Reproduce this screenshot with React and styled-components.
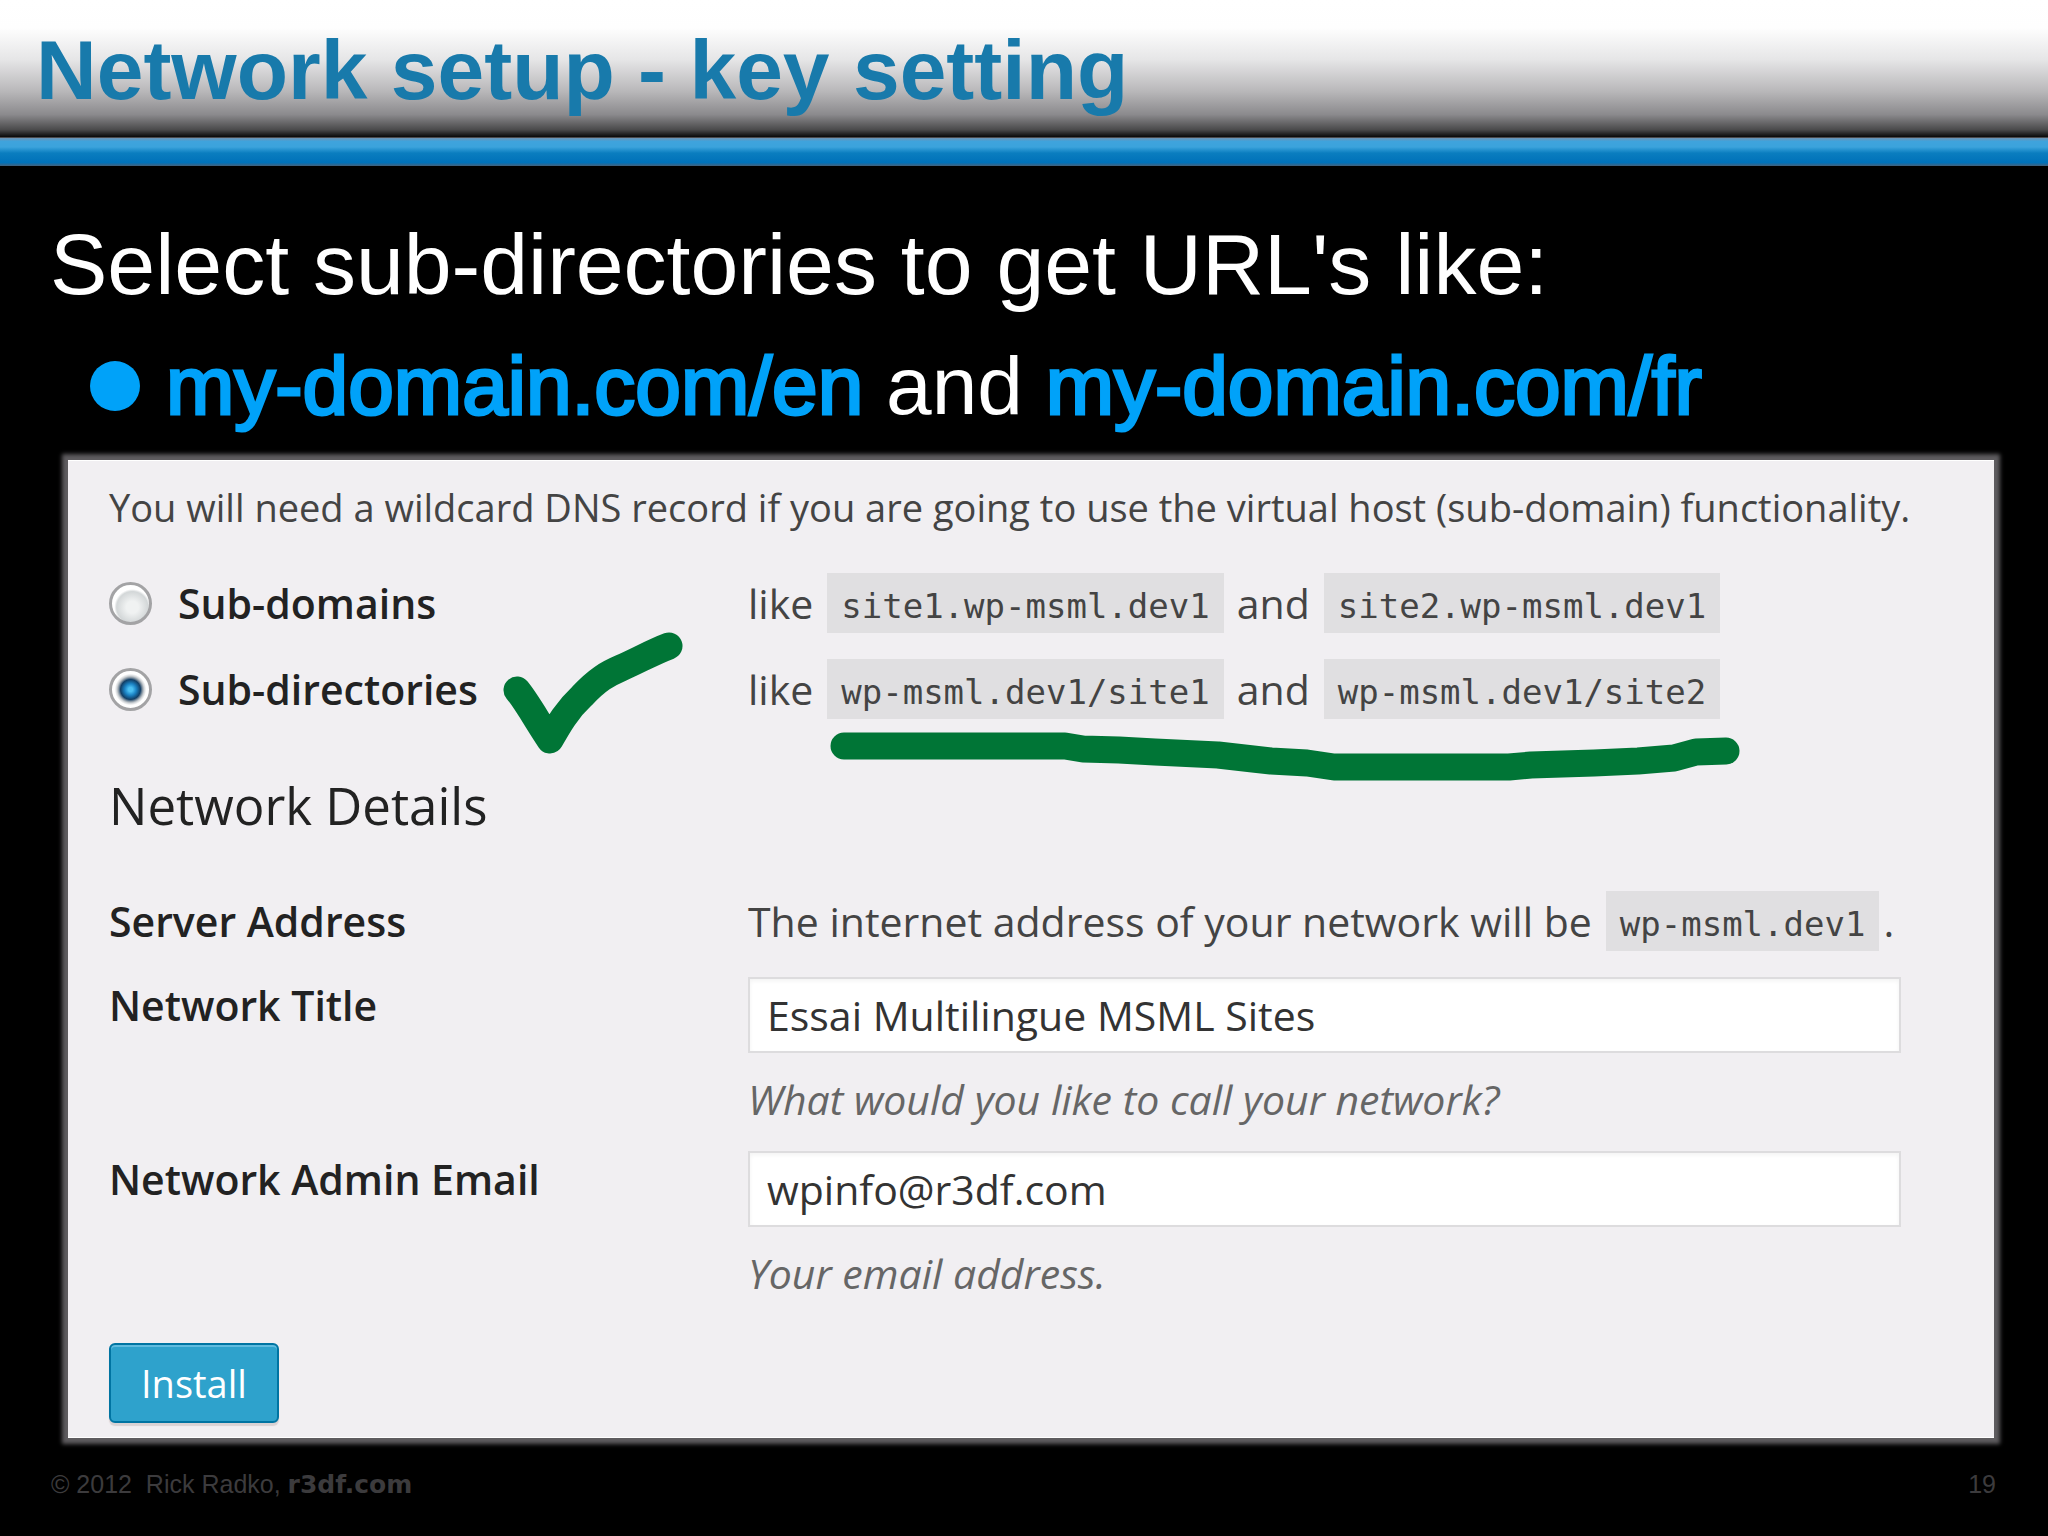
import React, { useState } from "react";
import styled, { createGlobalStyle } from "styled-components";

const GlobalStyle = createGlobalStyle`
  * {
    box-sizing: border-box;
  }
  body {
    margin: 0;
    background: #000;
  }
`;

const Slide = styled.div`
  display: flex;
  flex-direction: column;
  min-height: 100vh;
  background: #000;
  color: #fff;
  font-family: "Liberation Sans", Arial, sans-serif;
`;

const Header = styled.header`
  padding: 20px 36px 18px;
  background: linear-gradient(
    #fff 0%,
    #fefefe 20%,
    #e6e6e7 43%,
    #b9b8ba 66%,
    #8b8a8d 83%,
    #4a4a4b 94%,
    #0c0c0c 99%,
    #6d6d70 100%
  );
`;

const Title = styled.h1`
  margin: 0;
  font-size: 84px;
  line-height: 100px;
  color: #187aab;
`;

const Stripe = styled.div`
  height: 28px;
  background: linear-gradient(
    #6f93b3 0%,
    #3fa3dc 12%,
    #3ba3dc 32%,
    #0a7dbf 54%,
    #0071b9 88%,
    #43617c 100%
  );
`;

const Content = styled.main`
  display: flex;
  flex-direction: column;
  gap: 22px;
  padding: 48px 54px 0 50px;
`;

const Lead = styled.p`
  margin: 0;
  font-size: 86px;
  line-height: 100px;
`;

const Bullets = styled.ul`
  margin: 0;
  padding: 0 0 0 40px;
  list-style: none;
`;

const Bullet = styled.li`
  display: flex;
  align-items: center;
  gap: 26px;
  font-size: 82px;
  line-height: 100px;

  &::before {
    content: "";
    width: 50px;
    height: 50px;
    border-radius: 50%;
    background: #00a2f9;
  }
`;

const Domain = styled.span`
  color: #00a2f9;
  -webkit-text-stroke: 3px #00a2f9;
`;

const Panel = styled.form`
  margin: 2px 0 0 18px;
  padding: 22px 41px 14px;
  background: #f1eff2;
  border-top: 1px solid #fff;
  border-bottom: 1px solid #fff;
  box-shadow: 0 0 4px 6px #5e5c5f;
  color: #444;
  font-family: "Open Sans", sans-serif;
  font-size: 41px;
`;

const Intro = styled.p`
  margin: 0 0 42px;
  font-size: 38px;
  line-height: 48px;
`;

const Rows = styled.div`
  display: flex;
  flex-direction: column;
  gap: 26px;
  margin-right: 52px;
`;

const Row = styled.div`
  display: grid;
  grid-template-columns: 639fr 1153fr;
  line-height: 60px;
`;

const OptionLabel = styled.label`
  position: relative;
  display: flex;
  align-items: center;
  justify-self: start;
  gap: 26px;
  color: #222;
  font-weight: 600;
`;

const Radio = styled.input`
  appearance: none;
  width: 43px;
  height: 43px;
  margin: 0;
  border: 3px solid #a3a3a5;
  border-radius: 50%;
  background: radial-gradient(circle at 55% 60%, #f0f2f2 0 20%, #d3d7d8 52%, #fff 60%);

  &:checked {
    background: radial-gradient(
      circle,
      #4cc0f2 0 8%,
      #1b83c4 22%,
      #123f66 38%,
      #8c9aa6 46%,
      #cfd3d6 52%,
      #fff 60%
    );
  }
`;

const Example = styled.div`
  position: relative;
  display: flex;
  justify-self: start;
  align-items: center;
  white-space: nowrap;
`;

const Code = styled.code`
  margin: 0 ${(props) => (props.$tight ? "4px" : "13px")} 0 14px;
  padding: 6px 14px 0;
  background: #e0dfe1;
  font-family: "DejaVu Sans Mono", monospace;
  font-size: 34px;
  line-height: 54px;
`;

const Section = styled.h2`
  margin: 56px 0;
  color: #222;
  font-size: 51px;
  font-weight: 500;
  line-height: 60px;
`;

const FieldLabel = styled.label`
  color: #222;
  font-weight: 600;
  line-height: 56px;
`;

const FieldName = styled.div`
  color: #222;
  font-weight: 600;
`;

const Field = styled.div`
  display: flex;
  flex-direction: column;
  gap: 20px;
`;

const TextInput = styled.input`
  width: 100%;
  height: 76px;
  padding: 0 17px;
  border: 2px solid #dddcde;
  background: #fff;
  box-shadow: inset 0 2px 4px rgba(0, 0, 0, 0.05);
  color: #333;
  font: inherit;
`;

const Hint = styled.p`
  margin: 0;
  color: #666;
  font-style: italic;
  line-height: 52px;
`;

const InstallButton = styled.button`
  display: block;
  height: 80px;
  margin-top: 44px;
  padding: 0 30px;
  border: 2px solid #0074a2;
  border-radius: 6px;
  background: #2ea2cc;
  box-shadow: inset 0 2px 0 #5fbbdf, 0 3px 1px #d9d2d4;
  color: #fff;
  font: inherit;
  font-size: 38px;
`;

const Footer = styled.footer`
  display: flex;
  justify-content: space-between;
  padding: 30px 52px 30px 51px;
  color: #3c3b3d;
  font-size: 25px;
  line-height: 32px;
  white-space: pre;
`;

const Site = styled.strong`
  font-family: "DejaVu Sans", sans-serif;
`;

// pen marks drawn over the form
const Mark = styled.svg`
  position: absolute;
  overflow: visible;
  fill: none;
  stroke: #007536;
  stroke-width: 27px;
  stroke-linecap: round;
  stroke-linejoin: round;
  pointer-events: none;
`;

const CheckMark = styled(Mark)`
  left: 394px;
  top: -27px;
`;

const Underline = styled(Mark)`
  left: 83px;
  top: 73px;
`;

const options = [
  {
    value: "domains",
    label: "Sub-domains",
    examples: ["site1.wp-msml.dev1", "site2.wp-msml.dev1"],
  },
  {
    value: "directories",
    label: "Sub-directories",
    examples: ["wp-msml.dev1/site1", "wp-msml.dev1/site2"],
    marked: true,
  },
];

function App() {
  const [mode, setMode] = useState("directories");
  const [title, setTitle] = useState("Essai Multilingue MSML Sites");
  const [email, setEmail] = useState("wpinfo@r3df.com");

  return (
    <Slide>
      <GlobalStyle />
      <Header>
        <Title>Network setup - key setting</Title>
      </Header>
      <Stripe />
      <Content>
        <Lead>Select sub-directories to get URL's like:</Lead>
        <Bullets>
          <Bullet>
            <span>
              <Domain>my-domain.com/en</Domain> and{" "}
              <Domain>my-domain.com/fr</Domain>
            </span>
          </Bullet>
        </Bullets>
        <Panel onSubmit={(e) => e.preventDefault()}>
          <Intro>
            You will need a wildcard DNS record if you are going to use the
            virtual host (sub-domain) functionality.
          </Intro>
          <Rows>
            {options.map((option) => (
              <Row key={option.value}>
                <OptionLabel>
                  <Radio
                    type="radio"
                    name="mode"
                    value={option.value}
                    checked={mode === option.value}
                    onChange={() => setMode(option.value)}
                  />
                  {option.label}
                  {option.marked && (
                    <CheckMark width="180" height="122" aria-hidden="true">
                      <path d="M14 58 C24 70 36 92 47 108 C56 92 64 78 79 64 C94 48 104 42 118 36 C136 28 150 20 166 14" />
                    </CheckMark>
                  )}
                </OptionLabel>
                <Example>
                  like
                  <Code>{option.examples[0]}</Code>
                  and
                  <Code>{option.examples[1]}</Code>
                  {option.marked && (
                    <Underline width="909" height="50" aria-hidden="true">
                      <path d="M13 14 H234 L252 17 L288 18 L324 20 L387 23 L422 27 L440 29 L476 31 L503 35 H678 L700 33 L763 31 L807 29 L843 26 L865 20 L895 19" />
                    </Underline>
                  )}
                </Example>
              </Row>
            ))}
          </Rows>
          <Section>Network Details</Section>
          <Rows>
            <Row>
              <FieldName>Server Address</FieldName>
              <Example>
                The internet address of your network will be
                <Code $tight>wp-msml.dev1</Code>.
              </Example>
            </Row>
            <Row>
              <FieldLabel htmlFor="title">Network Title</FieldLabel>
              <Field>
                <TextInput
                  id="title"
                  type="text"
                  value={title}
                  onChange={(e) => setTitle(e.target.value)}
                />
                <Hint>What would you like to call your network?</Hint>
              </Field>
            </Row>
            <Row>
              <FieldLabel htmlFor="email">Network Admin Email</FieldLabel>
              <Field>
                <TextInput
                  id="email"
                  type="text"
                  value={email}
                  onChange={(e) => setEmail(e.target.value)}
                />
                <Hint>Your email address.</Hint>
              </Field>
            </Row>
          </Rows>
          <InstallButton type="submit">Install</InstallButton>
        </Panel>
      </Content>
      <Footer>
        <span>
          {"© 2012  Rick Radko, "}
          <Site>r3df.com</Site>
        </span>
        <span>19</span>
      </Footer>
    </Slide>
  );
}

export default App;
